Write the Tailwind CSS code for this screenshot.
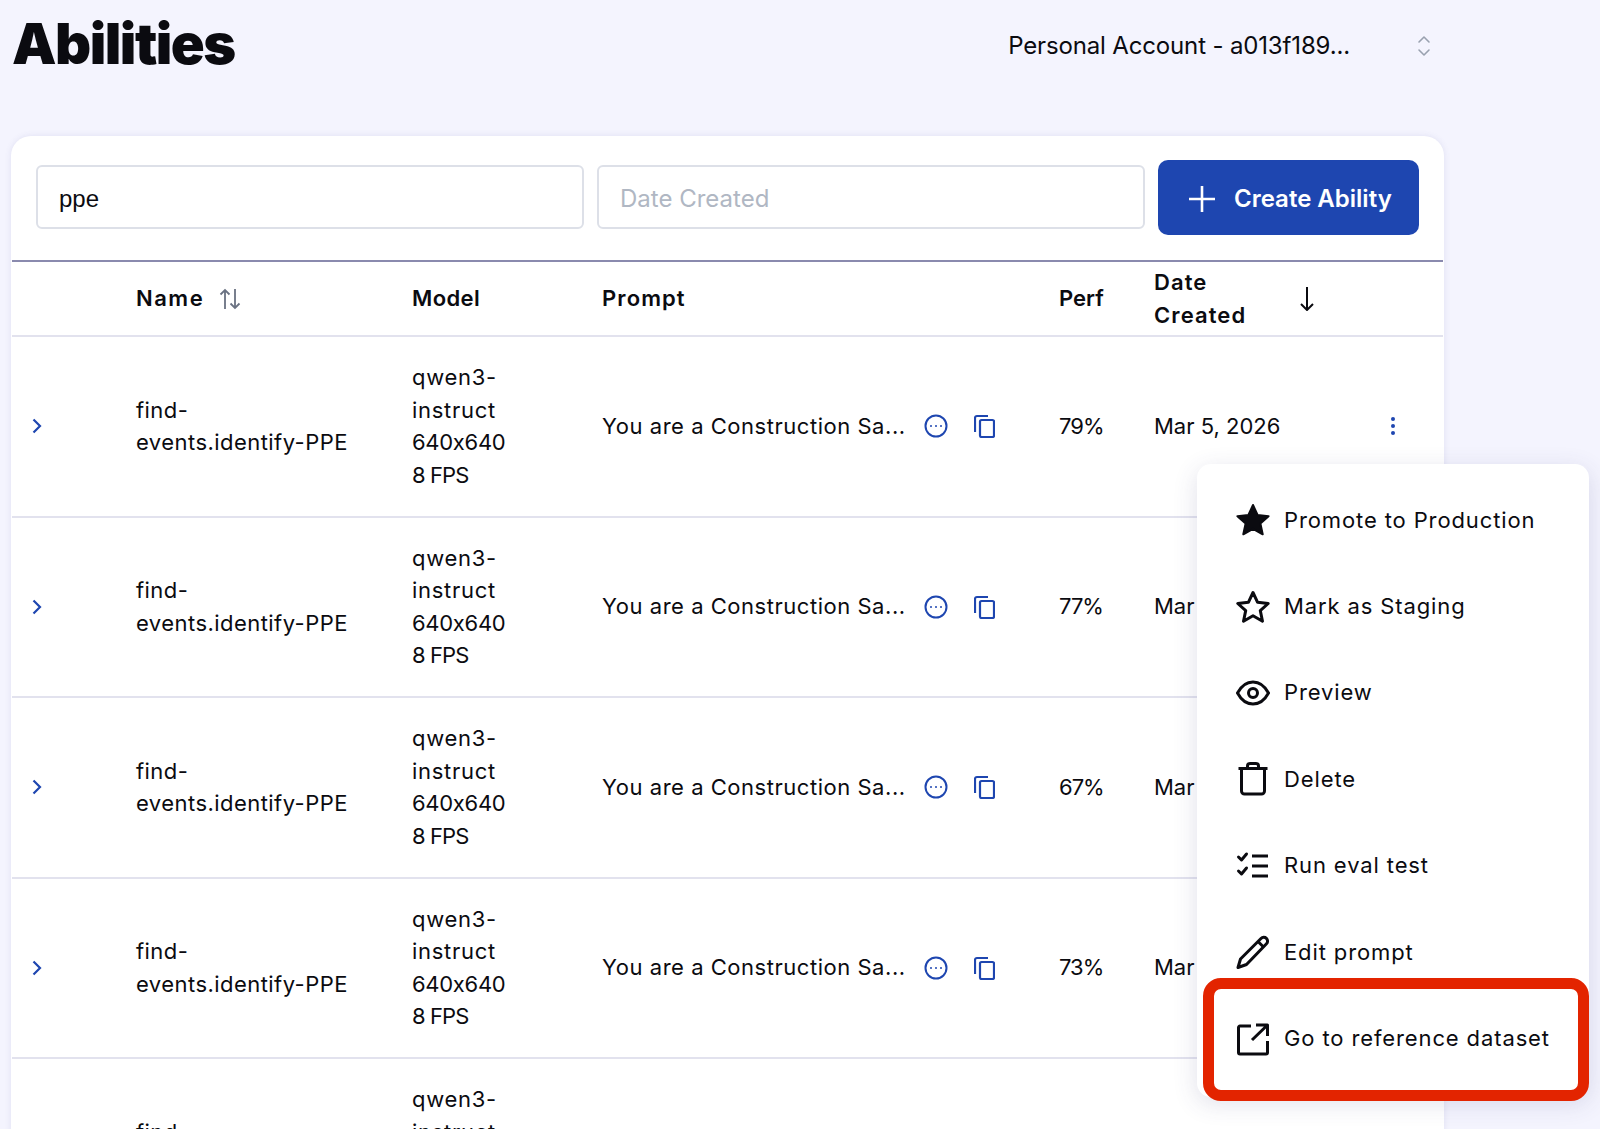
<!DOCTYPE html>
<html lang="en">

<head>
    <meta charset="UTF-8" />
    <meta name="viewport" content="width=device-width, initial-scale=1.0" />
    <title>Abilities</title>
    <script src="https://cdn.jsdelivr.net/npm/@tailwindcss/browser@4"></script>
</head>

<body class="h-screen overflow-hidden bg-[#f4f4fe] font-['Inter',sans-serif] text-[#0b0b10] [font-variant-ligatures:no-contextual]">
    <header class="flex h-[136px] items-start justify-between">
        <h1 class="ml-[12px] mt-[8px] text-[56px] leading-[72px] font-black tracking-[-1.5px]">Abilities</h1>
        <div class="mr-[168px] mt-[31px] flex items-center gap-[66px]">
            <span class="text-[24px] leading-[30px] tracking-[-0.15px]">Personal Account - a013f189...</span>
            <svg class="h-[22px] w-[16px] text-gray-400" viewBox="0 0 16 22" fill="none" stroke="currentColor" stroke-width="1.6" stroke-linecap="round" stroke-linejoin="round">
                <path d="M3 7l5-5 5 5" />
                <path d="M3 15l5 5 5-5" />
            </svg>
        </div>
    </header>

    <main class="relative ml-[11px] w-[1433px] rounded-t-[20px] bg-white shadow-[0_0_6px_rgba(80,80,160,0.12)]">
        <div class="mx-[1px] flex h-[126px] items-start gap-[13px] border-b-2 border-[#8a8aae] pl-[24px] pt-[24px]">
            <div class="mt-[5px] flex h-[64px] w-[548px] items-center rounded-[6px] border-2 border-[#dde0e8] px-[21px] pt-[3px] font-['Liberation_Sans',sans-serif] text-[24px]">ppe</div>
            <div class="mt-[5px] flex h-[64px] w-[548px] items-center rounded-[6px] border-2 border-[#dde0e8] px-[21px] pt-[3px] text-[24px] text-[#b0b7c3]">Date Created</div>
            <button class="flex h-[75px] w-[261px] items-center gap-[19px] rounded-[10px] bg-[#1e46b0] pl-[31px] pt-[2px] text-[24px] font-semibold text-white">
                <svg class="h-[26px] w-[26px]" viewBox="0 0 26 26" fill="none" stroke="currentColor" stroke-width="2.6">
                    <path d="M13 0v26M0 13h26" />
                </svg>
                Create Ability
            </button>
        </div>

        <div class="mx-[1px] grid h-[75px] grid-cols-[124px_276px_190px_457px_95px_1fr] items-center border-b-2 border-[#e2e2ee] text-[22px] leading-[32.6px] font-semibold tracking-[1.1px]">
            <div></div>
            <div class="flex items-center gap-[14px] tracking-[1.5px]">Name
                <svg class="h-[24px] w-[24px] text-gray-500" viewBox="0 0 24 24" fill="none" stroke="currentColor" stroke-width="1.8">
                    <path d="M7 22V3M2.5 7.5L7 3l4.5 4.5" />
                    <path d="M17 2v19M12.5 16.5L17 21l4.5-4.5" />
                </svg>
            </div>
            <div class="tracking-[0.4px]">Model</div>
            <div>Prompt</div>
            <div class="tracking-normal">Perf</div>
            <div class="flex items-center gap-[52px]">
                <div>Date<br />Created</div>
                <svg class="h-[24px] w-[18px]" viewBox="0 0 18 24" fill="none" stroke="currentColor" stroke-width="2">
                    <path d="M9 0v23M3 17l6 6 6-6" />
                </svg>
            </div>
        </div>

        <div id="rows" class="mx-[1px]"></div>

        <!-- actions menu -->
        <div class="absolute left-[1186px] top-[328px] z-10 flex h-[633px] w-[392px] flex-col rounded-[14px] bg-white pl-[39px] pt-[13px] text-[22px] tracking-[0.88px] shadow-[0_6px_24px_rgba(60,60,120,0.16)]">
            <div class="flex h-[86.4px] items-center gap-[14px]">
                <svg class="h-[34px] w-[34px]" viewBox="0 0 34 34" fill="currentColor" stroke="currentColor" stroke-width="2" stroke-linejoin="round">
                    <path d="M17 2l4.6 10 11 1.2-8.2 7.3 2.3 10.8L17 25.800l-9.700 5.500 2.300-10.800-8.200-7.300 11-1.200z" />
                </svg>
                Promote to Production
            </div>
            <div class="flex h-[86.4px] items-center gap-[14px]">
                <svg class="h-[34px] w-[34px]" viewBox="0 0 34 34" fill="none" stroke="currentColor" stroke-width="3" stroke-linejoin="round">
                    <path d="M17 2.500l4.600 9.800 10.600 1.200-7.900 7.100 2.200 10.600L17 25.800l-9.500 5.400 2.200-10.600-7.900-7.100 10.600-1.200z" />
                </svg>
                Mark as Staging
            </div>
            <div class="flex h-[86.4px] items-center gap-[14px]">
                <svg class="h-[34px] w-[34px]" viewBox="0 0 34 34" fill="none" stroke="currentColor" stroke-width="3">
                    <path d="M1.500 17C5 10.500 10.500 6 17 6S29 10.500 32.500 17C29 23.500 23.500 28 17 28S5 23.500 1.500 17z" />
                    <circle cx="17" cy="17" r="4.500" />
                </svg>
                Preview
            </div>
            <div class="flex h-[86.4px] items-center gap-[14px]">
                <svg class="h-[34px] w-[34px]" viewBox="0 0 34 34" fill="none" stroke="currentColor" stroke-width="3" stroke-linejoin="round">
                    <path d="M2.500 6.500h29M5.500 6.500V29a3 3 0 0 0 3 3h17a3 3 0 0 0 3-3V6.500M11.500 6.500V4a2.500 2.500 0 0 1 2.500-2.500h6A2.500 2.500 0 0 1 22.500 4v2.500" />
                </svg>
                Delete
            </div>
            <div class="flex h-[86.4px] items-center gap-[14px]">
                <svg class="h-[34px] w-[34px]" viewBox="0 0 34 34" fill="none" stroke="currentColor" stroke-width="3" stroke-linecap="round" stroke-linejoin="round">
                    <path d="M2.500 8l3 3 5-6M2.500 22l3 3 5-6" />
                    <path d="M16 7h16M16 17h16M16 27h16" stroke-linecap="butt" />
                </svg>
                Run eval test
            </div>
            <div class="flex h-[86.4px] items-center gap-[14px]">
                <svg class="h-[34px] w-[34px]" viewBox="0 0 34 34" fill="none" stroke="currentColor" stroke-width="3" stroke-linejoin="round">
                    <path d="M25 3.500a3.800 3.800 0 0 1 5.500 5.300L10.500 29.500 2 32.500l2.500-8.500z" />
                    <path d="M22 6.500l5.500 5.500" />
                </svg>
                Edit prompt
            </div>
            <div class="flex h-[86.4px] items-center gap-[14px]">
                <svg class="h-[34px] w-[34px]" viewBox="0 0 34 34" fill="none" stroke="currentColor" stroke-width="3" stroke-linejoin="round">
                    <path d="M15 4H4a1.500 1.500 0 0 0-1.500 1.500v25A1.500 1.500 0 0 0 4 32h26a1.500 1.500 0 0 0 1.500-1.500V19" />
                    <path d="M20 3h11.500V14M31.500 3L16 18" />
                </svg>
                Go to reference dataset
            </div>
        </div>

        <!-- red highlight round the last item -->
        <div class="absolute left-[1192px] top-[842px] z-20 h-[123px] w-[386px] rounded-[18px] border-[11px] border-[#e32400]"></div>
    </main>

    <script>
        const perf = ["79%", "77%", "67%", "73%", "71%"];
        document.getElementById("rows").innerHTML = perf.map((p) => `
            <div class="grid h-[180.5px] grid-cols-[124px_276px_190px_457px_95px_1fr] items-center border-b-2 border-[#e2e2ee] text-[22px] leading-[32.6px]">
                <div class="pl-[20px]">
                    <svg class="h-[16px] w-[10px] text-[#1e46b0]" viewBox="0 0 10 16" fill="none" stroke="currentColor" stroke-width="2.200">
                        <path d="M1.500 1.500L8 8l-6.500 6.500" />
                    </svg>
                </div>
                <div class="tracking-[0.45px]">find-<br />events.identify-PPE</div>
                <div>
                    <div class="tracking-[0.7px]">qwen3-</div>
                    <div class="tracking-[0.7px]">instruct</div>
                    <div class="tracking-[-0.3px]">640x640</div>
                    <div class="tracking-[-0.9px]">8 FPS</div>
                </div>
                <div class="flex items-center">
                    <span class="w-[322px] whitespace-nowrap tracking-[0.53px]">You are a Construction Sa...</span>
                    <svg class="h-[24px] w-[24px] text-[#1e46b0]" viewBox="0 0 24 24" fill="none" stroke="currentColor" stroke-width="2">
                        <circle cx="12" cy="12" r="10.500" />
                        <circle cx="7" cy="12" r="1" fill="currentColor" stroke="none" />
                        <circle cx="12" cy="12" r="1" fill="currentColor" stroke="none" />
                        <circle cx="17" cy="12" r="1" fill="currentColor" stroke="none" />
                    </svg>
                    <svg class="ml-[26px] h-[24px] w-[21px] text-[#1e46b0]" viewBox="0 0 21 24" fill="none" stroke="currentColor" stroke-width="2.200">
                        <path d="M14 2H3a2 2 0 0 0-2 2v14" />
                        <rect x="6" y="6" width="14" height="17" rx="1.500" />
                    </svg>
                </div>
                <div class="tracking-[-1px]">${p}</div>
                <div class="flex items-center justify-between pr-[48px]">
                    <span>Mar 5, 2026</span>
                    <svg class="h-[18px] w-[4px] text-[#1e46b0]" viewBox="0 0 4 18" fill="currentColor">
                        <circle cx="2" cy="2" r="2" />
                        <circle cx="2" cy="9" r="2" />
                        <circle cx="2" cy="16" r="2" />
                    </svg>
                </div>
            </div>`).join("");
    </script>
</body>

</html>
